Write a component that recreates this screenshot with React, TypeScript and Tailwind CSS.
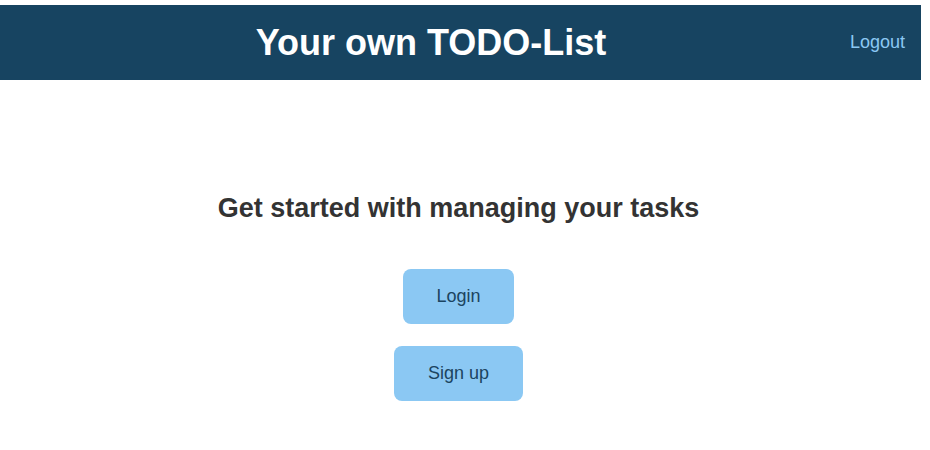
import React from 'react';

export default function App() {
  return (
    <div className="min-h-[450px] bg-white pt-[5px] pr-[9px] font-['Liberation_Sans',Arial,sans-serif]">
      <header className="flex h-[75px] items-center bg-[#174461] pl-3 pr-4">
        <h1 className="flex-1 text-center text-[36px] font-bold leading-none text-white">
          Your own TODO-List
        </h1>
        <a href="#" className="text-[18px] text-[#8bc8f3]">
          Logout
        </a>
      </header>

      <main className="flex flex-col items-center pt-[112px] pr-1">
        <h2 className="text-[27px] font-bold leading-[32px] text-[#333333]">
          Get started with managing your tasks
        </h2>
        <div className="mt-[45px] flex flex-col items-center gap-[22px]">
          <button className="h-[55px] w-[111px] rounded-lg bg-[#8bc8f3] text-[18px] text-[#1b4460]">
            Login
          </button>
          <button className="h-[55px] w-[129px] rounded-lg bg-[#8bc8f3] text-[18px] text-[#1b4460]">
            Sign up
          </button>
        </div>
      </main>
    </div>
  );
}
